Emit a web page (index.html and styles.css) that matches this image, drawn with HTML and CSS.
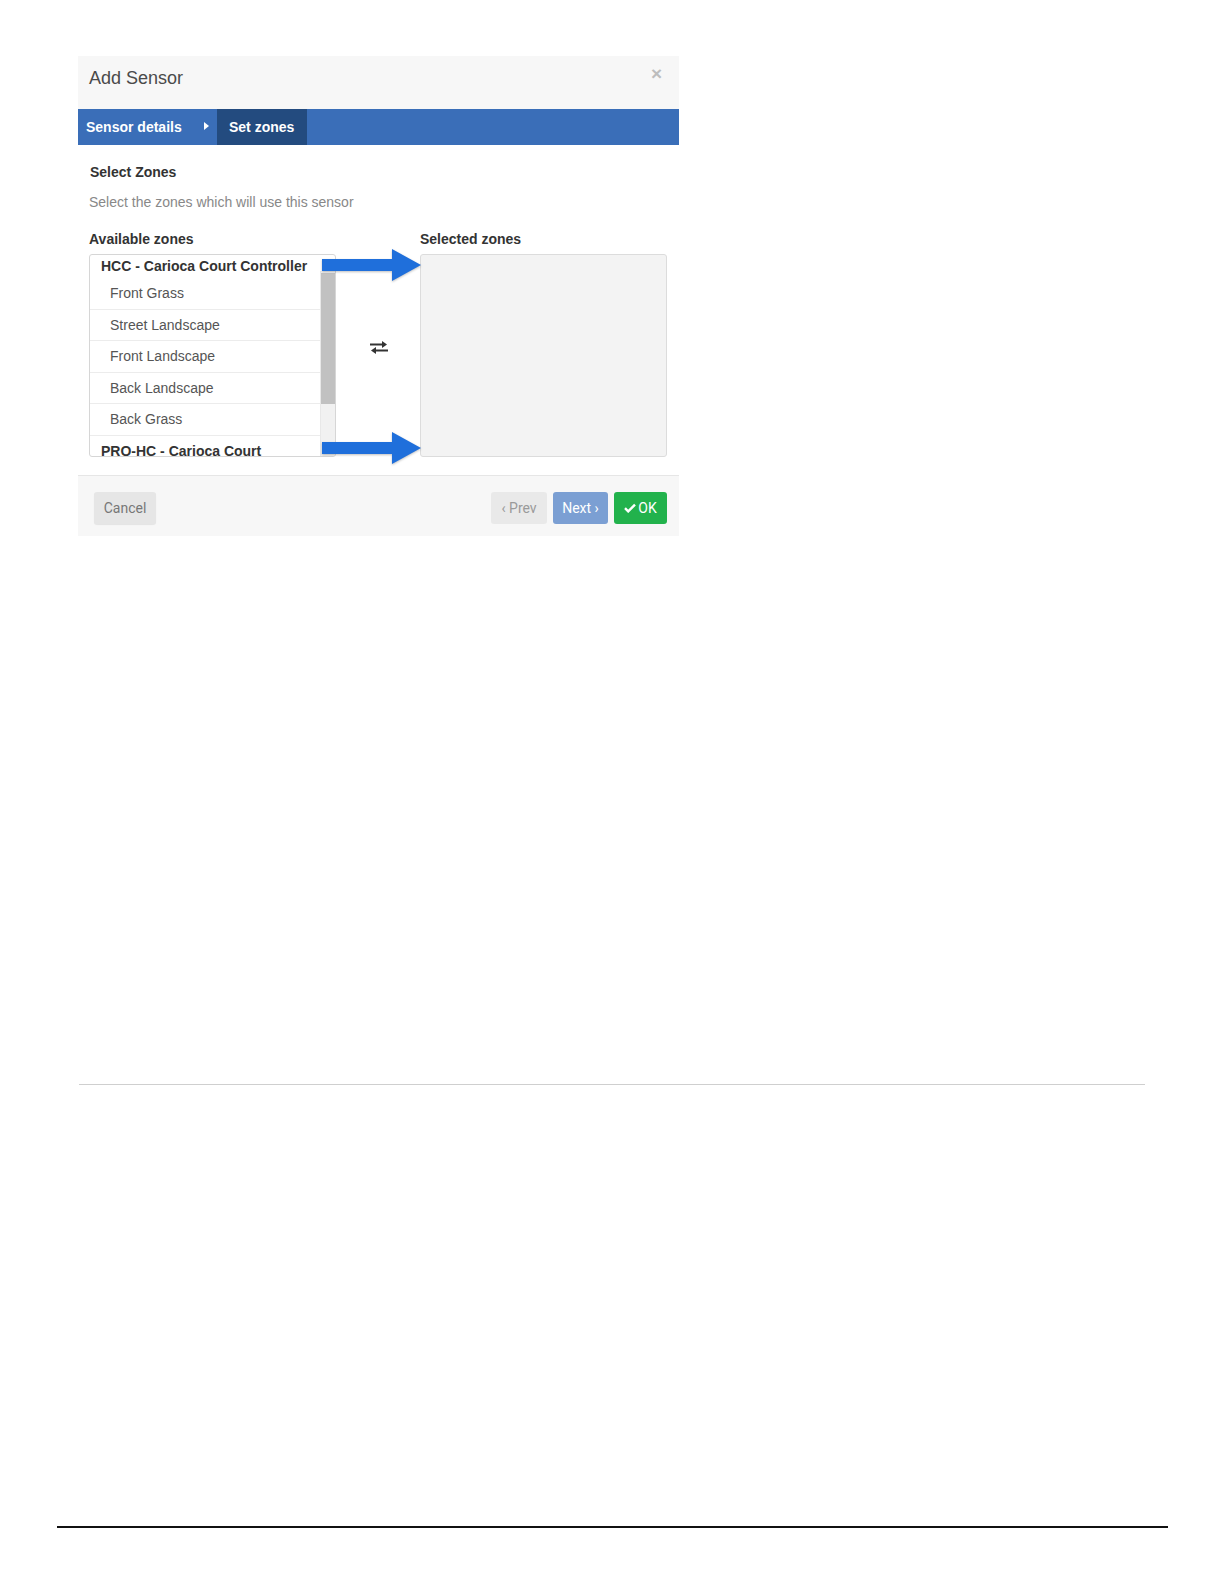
FILE: index.html
```html
<!DOCTYPE html>
<html>
<head>
<title>Add Sensor</title>
<link rel="stylesheet" href="styles.css">
</head>
<body>

<div class="sheet">
  <div class="dialog">
    <div class="dialog-header">
      <span class="dialog-title">Add Sensor</span>
      <span class="close">&times;</span>
    </div>

    <div class="steps">
      <div class="step">Sensor details <span class="caret"></span></div>
      <div class="step current">Set zones</div>
    </div>

    <div class="dialog-body">
      <div class="section-title">Select Zones</div>
      <div class="hint">Select the zones which will use this sensor</div>

      <div class="zones">
        <div class="zone-col">
          <div class="col-label">Available zones</div>
          <div class="zone-list">
            <div class="zone-items">
              <div class="group">HCC - Carioca Court Controller</div>
              <div class="item">Front Grass</div>
              <div class="item">Street Landscape</div>
              <div class="item">Front Landscape</div>
              <div class="item">Back Landscape</div>
              <div class="item">Back Grass</div>
              <div class="group">PRO-HC - Carioca Court</div>
            </div>
            <div class="scrollbar"><div class="thumb"></div></div>
          </div>
        </div>

        <div class="swap">
          <svg width="20" height="14" viewBox="0 0 20 14">
            <path d="M1 4.5h14" stroke="#333" stroke-width="2" fill="none"/>
            <path d="M13 1l5 3.5-5 3.5z" fill="#333"/>
            <path d="M5 10.5h14" stroke="#333" stroke-width="2" fill="none"/>
            <path d="M7 7l-5 3.5 5 3.5z" fill="#333"/>
          </svg>
        </div>

        <div class="zone-col">
          <div class="col-label">Selected zones</div>
          <div class="selected-list"></div>
        </div>

        <!-- callout arrows drawn over the screenshot -->
        <svg class="callout top" width="100" height="32" viewBox="0 0 100 32">
          <path d="M0 10h70V0l29 16-29 16V22H0z" fill="#1f6fdb"/>
        </svg>
        <svg class="callout bottom" width="100" height="32" viewBox="0 0 100 32">
          <path d="M0 10h70V0l29 16-29 16V22H0z" fill="#1f6fdb"/>
        </svg>
      </div>
    </div>

    <div class="dialog-footer">
      <button class="btn btn-cancel">Cancel</button>
      <div class="nav-buttons">
        <button class="btn btn-prev">&lsaquo; Prev</button>
        <button class="btn btn-next">Next &rsaquo;</button>
        <button class="btn btn-ok">
          <svg width="12" height="10" viewBox="0 0 12 10"><path d="M1 5.2l3.2 3.2L11 1.6" stroke="#fff" stroke-width="2.4" fill="none"/></svg>OK
        </button>
      </div>
    </div>
  </div>

  <div class="rule-gray"></div>
  <div class="rule-black"></div>
</div>

</body>
</html>
```

FILE: styles.css
```css
body {
  margin: 0;
  background: #fff;
  font-family: 'Liberation Sans', Arial, sans-serif;
  color: #333;
}

.sheet {
  padding-top: 56px;
}

.dialog {
  width: 601px;
  margin-left: 78px;
}

.dialog-header {
  height: 53px;
  background: #f7f7f7;
  display: flex;
  justify-content: space-between;
  align-items: flex-start;
  padding: 0 17px 0 11px;
  box-sizing: border-box;
}

.dialog-title {
  font-size: 18px;
  color: #4a4a4a;
  margin-top: 12px;
}

.close {
  font-size: 19px;
  color: #bdbdbd;
  margin-top: 7px;
  font-weight: bold;
}

.steps {
  height: 36px;
  background: #3a6eb8;
  display: flex;
  color: #fff;
  font-weight: bold;
  font-size: 14px;
  white-space: nowrap;
}

.step {
  display: flex;
  align-items: center;
  justify-content: space-between;
  padding: 0 8px;
  width: 139px;
  box-sizing: border-box;
}

.caret {
  width: 0;
  height: 0;
  border-top: 4.5px solid transparent;
  border-bottom: 4.5px solid transparent;
  border-left: 5px solid #fff;
  margin-top: -2px;
}

.step.current {
  background: #234b7f;
  width: 90px;
  padding-left: 12px;
}

.dialog-body {
  padding: 17px 12px 18px 11px;
}

.section-title {
  font-weight: bold;
  font-size: 14px;
  line-height: 20px;
  color: #333;
  padding-left: 1px;
}

.hint {
  font-size: 14px;
  line-height: 20px;
  color: #888;
  margin-top: 10px;
}

.zones {
  display: flex;
  margin-top: 17px;
  position: relative;
}

.zone-col {
  width: 247px;
}

.col-label {
  font-weight: bold;
  font-size: 14px;
  line-height: 20px;
  color: #333;
  margin-bottom: 5px;
}

.zone-list {
  height: 203px;
  border: 1px solid #d6d6d6;
  border-radius: 3px;
  box-sizing: border-box;
  display: flex;
  overflow: hidden;
  background: #fff;
}

.zone-items {
  flex: 1;
}

.group {
  font-weight: bold;
  font-size: 14px;
  color: #333;
  padding: 3px 11px 0;
  height: 20px;
  line-height: 17px;
}

.item {
  font-size: 14px;
  color: #555;
  padding-left: 20px;
  height: 31.5px;
  line-height: 30px;
  border-bottom: 1px solid #ececec;
  box-sizing: border-box;
}

.item + .group {
  height: 29px;
  line-height: 31px;
  padding-top: 0;
}

.scrollbar {
  width: 14px;
  background: #f1f1f1;
  margin-top: 16px;
  border-left: 1px solid #e8e8e8;
}

.thumb {
  height: 131px;
  background: #c1c1c1;
  margin-top: 2px;
}

.swap {
  width: 84px;
  display: flex;
  align-items: center;
  justify-content: center;
  padding-top: 7px;
  padding-left: 2px;
  box-sizing: border-box;
}

.selected-list {
  height: 203px;
  background: #f3f3f3;
  border: 1px solid #dcdcdc;
  border-radius: 3px;
  box-sizing: border-box;
}

.callout {
  position: absolute;
  left: 233px;
  filter: drop-shadow(0 1px 1px rgba(0, 0, 0, 0.25));
}

.callout.top {
  top: 20px;
}

.callout.bottom {
  top: 203px;
}

.dialog-footer {
  background: #f7f7f7;
  border-top: 1px solid #e6e6e6;
  height: 61px;
  box-sizing: border-box;
  display: flex;
  justify-content: space-between;
  align-items: flex-start;
  padding: 16px 12px 0 16px;
}

.nav-buttons {
  display: flex;
  gap: 6px;
}

.btn {
  height: 32px;
  border: none;
  border-radius: 3px;
  font-family: Roboto, 'Liberation Sans', sans-serif;
  font-size: 14px;
  padding: 0;
  display: flex;
  align-items: center;
  justify-content: center;
  gap: 3px;
}

.btn-cancel {
  width: 62px;
  background: #e6e6e6;
  color: #777;
  box-shadow: 0 1px 1px rgba(0, 0, 0, 0.08);
}

.btn-prev {
  width: 56px;
  background: #e9e9e9;
  color: #9a9a9a;
}

.btn-next {
  width: 55px;
  background: #7b9fd3;
  color: #fff;
}

.btn-ok {
  width: 53px;
  background: #22b24c;
  color: #fff;
  gap: 2px;
}

.rule-gray {
  margin: 548px 0 0 79px;
  width: 1066px;
  height: 1px;
  background: #cfcfcf;
}

.rule-black {
  margin: 441px 0 0 57px;
  width: 1111px;
  height: 2px;
  background: #111;
}
```
